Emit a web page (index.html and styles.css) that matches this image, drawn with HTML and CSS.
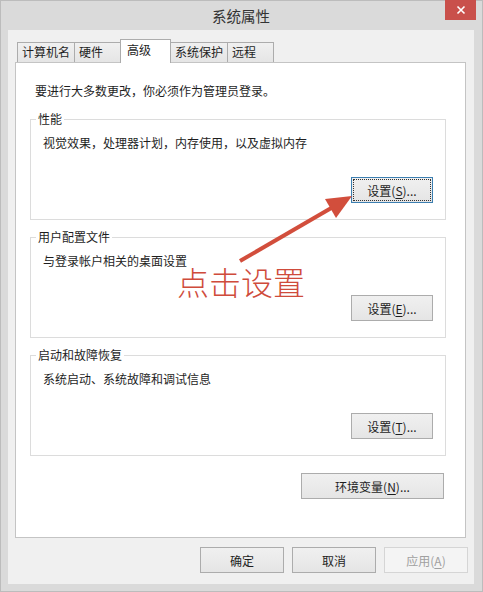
FILE: index.html
```html
<!DOCTYPE html>
<html>
<head>
  <meta charset="UTF-8" />
  <title>系统属性</title>
  <link rel="stylesheet" href="styles.css">
</head>
<body>

  <div class="window">
    <div class="titlebar">
      <span class="title">系统属性</span>
      <button class="close" aria-label="关闭">
        <svg width="10" height="10" viewBox="0 0 10 10">
          <path d="M1.5 1.5 L8.5 8.5 M8.5 1.5 L1.5 8.5" stroke="#fff" stroke-width="1.6" fill="none" />
        </svg>
      </button>
    </div>

    <div class="client">
      <div class="tabs">
        <div class="tab">计算机名</div>
        <div class="tab">硬件</div>
        <div class="tab active">高级</div>
        <div class="tab">系统保护</div>
        <div class="tab">远程</div>
      </div>

      <div class="panel">
        <p class="intro">要进行大多数更改，你必须作为管理员登录。</p>

        <div class="group">
          <div class="group-title">性能</div>
          <p class="group-text">视觉效果，处理器计划，内存使用，以及虚拟内存</p>
          <button class="btn group-btn focused">设置(<u>S</u>)...</button>
        </div>

        <div class="group">
          <div class="group-title">用户配置文件</div>
          <p class="group-text">与登录帐户相关的桌面设置</p>
          <button class="btn group-btn">设置(<u>E</u>)...</button>
        </div>

        <div class="group">
          <div class="group-title">启动和故障恢复</div>
          <p class="group-text">系统启动、系统故障和调试信息</p>
          <button class="btn group-btn">设置(<u>T</u>)...</button>
        </div>

        <button class="btn env-btn">环境变量(<u>N</u>)...</button>
      </div>

      <div class="footer">
        <button class="btn footer-btn">确定</button>
        <button class="btn footer-btn">取消</button>
        <button class="btn footer-btn" disabled>应用(<u>A</u>)</button>
      </div>
    </div>

    <!-- red hint drawn over the dialog -->
    <svg class="hint-arrow" width="483" height="592" viewBox="0 0 483 592">
      <line x1="240" y1="261" x2="333" y2="207" stroke="#d24e3c" stroke-width="4" />
      <polygon points="352,196 325,199 336,218" fill="#d24e3c" />
    </svg>
    <div class="hint-label">点击设置</div>
  </div>

</body>
</html>
```

FILE: styles.css
```css
body {
  margin: 0;
  font-family: "Noto Sans CJK SC", "Noto Sans", sans-serif;
  font-size: 12px;
  color: #1e1e1e;
}
.window {
  position: relative;
  width: 483px;
  height: 592px;
  box-sizing: border-box;
  border: 1px solid #bcbcbc;
  background: #dadada;
  padding: 0 8px 7px 7px;
}
.titlebar {
  height: 29px;
  display: grid;
  grid-template-columns: 1fr auto 1fr;
  align-items: center;
}
.title {
  grid-column: 2;
  font-size: 14.5px;
  line-height: 20px;
  color: #333;
  margin-top: 1px;
}
.close {
  grid-column: 3;
  justify-self: end;
  align-self: start;
  width: 31px;
  height: 20px;
  margin: -1px -2px 0 0;
  padding: 0;
  border: none;
  background: #c9504b;
  display: flex;
  align-items: center;
  justify-content: center;
}
.client {
  height: 554px;
  box-sizing: border-box;
  background: #f0f0f0;
  padding: 9px 6px 0 7px;
}
.tabs {
  display: flex;
  align-items: flex-end;
  height: 24px;
  padding-left: 2px;
  margin-bottom: -1px;
}
.tab {
  box-sizing: border-box;
  height: 20px;
  min-width: 47px;
  padding: 0 4px;
  margin-bottom: 1px;
  line-height: 18px;
  border: 1px solid #acacac;
  border-bottom: none;
  background: linear-gradient(#f0f0f0, #e5e5e5);
  white-space: nowrap;
}
.tab + .tab {
  margin-left: -1px;
}
.tab.active {
  height: 24px;
  min-width: 51px;
  padding: 0 6px;
  margin-bottom: 0;
  line-height: 20px;
  background: #fff;
  position: relative;
  z-index: 1;
}
.panel {
  box-sizing: border-box;
  height: 476px;
  margin-right: 2px;
  background: #fff;
  border: 1px solid #c4c4c4;
  padding: 20px 19px 0 14px;
}
.intro {
  margin: 0;
  padding-left: 5px;
  line-height: 16px;
}
.group {
  margin-top: 17px;
  border: 1px solid #dcdcdc;
  padding: 0 12px 16px;
}
.intro + .group {
  margin-top: 20px;
}
.group-title {
  width: fit-content;
  margin: -9px 0 0 -7px;
  padding: 0 2px;
  line-height: 16px;
  background: #fff;
}
.group-text {
  margin: 8px 0 0;
  line-height: 16px;
}
.btn {
  box-sizing: border-box;
  height: 26px;
  padding: 0;
  font-family: inherit;
  font-size: 12px;
  color: #1e1e1e;
  border: 1px solid #acacac;
  background: linear-gradient(#f0f0f0, #e5e5e5);
}
.btn u {
  text-underline-offset: 2px;
}
.group-btn {
  display: block;
  width: 82px;
  margin: 26px 0 0 auto;
}
.btn.focused {
  border-color: #3c7fb1;
  outline: 1px dotted #333;
  outline-offset: -3px;
}
.env-btn {
  display: block;
  width: 143px;
  margin: 17px 2px 0 auto;
}
.footer {
  display: flex;
  justify-content: flex-end;
  gap: 8px;
  margin-top: 9px;
}
.footer-btn {
  width: 84px;
}
.btn:disabled {
  color: #a0a0a0;
  border-color: #d5d5d5;
  background: #f4f4f4;
}
.hint-arrow {
  position: absolute;
  top: -1px;
  left: -1px;
  pointer-events: none;
}
.hint-label {
  position: absolute;
  left: 176px;
  top: 262px;
  font-size: 32px;
  font-weight: 300;
  line-height: 36px;
  color: #cf4b3b;
  white-space: nowrap;
}
```
